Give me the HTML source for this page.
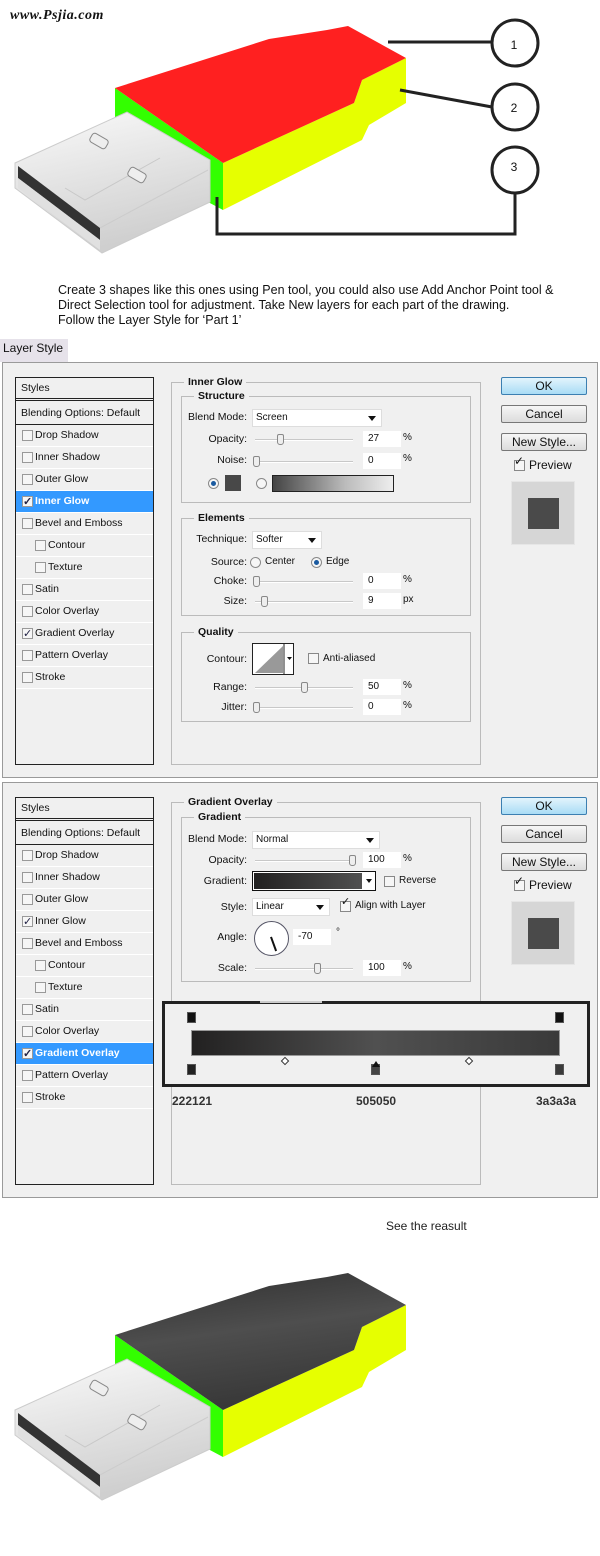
<!DOCTYPE html>
<html><head><meta charset="utf-8">
<style>
*{margin:0;padding:0;box-sizing:border-box}
body{width:600px;height:1556px;background:#fff;position:relative;overflow:hidden;font-family:"Liberation Sans",Tahoma,sans-serif;font-size:11px;color:#111}
.a{position:absolute}
.dlg{position:absolute;left:2px;width:596px;background:#f0f0f0;border:1px solid #9a9a9a}
.lp{position:absolute;left:12px;top:14px;width:139px;height:388px;border:1px solid #222;background:#f0f0f0}
.row{position:absolute;left:0;width:137px;height:22px;border-bottom:1px solid #fff;line-height:21px;padding-left:19px;font-size:10.5px}
.row .cb{position:absolute;left:6px;top:5px;width:11px;height:11px;border:1px solid #999;background:#f6f6f6}
.row.in{padding-left:32px}.row.in .cb{left:19px}
.row.sel{background:#3399ff;color:#fff;font-weight:bold}
.cb.on::after{content:"✓";position:absolute;left:0;top:-5px;font-size:11px;color:#224}
.fs{position:absolute;border:1px solid #bbb}
.lg{position:absolute;background:#f0f0f0;font-weight:bold;font-size:10.5px;padding:0 4px;line-height:12px}
.lbl{position:absolute;text-align:right;width:80px;font-size:10.5px;line-height:14px}
.dd{position:absolute;height:18px;background:#fff;border:1px solid #ddd;font-size:10px;line-height:16px;padding-left:3px}
.dd::after{content:"";position:absolute;right:5px;top:6px;border:4px solid transparent;border-top:5px solid #111}
.sl{position:absolute;height:2px;background:#c8c8c8;border-bottom:1px solid #fff}
.th{position:absolute;width:7px;height:11px;border:1px solid #888;background:#eee;border-radius:2px 2px 3px 3px}
.inp{position:absolute;width:38px;height:16px;background:#fff;font-size:10px;line-height:16px;padding-left:5px}
.u{position:absolute;font-size:10px}
.btn{position:absolute;left:498px;width:86px;height:18px;border:1px solid #777;border-radius:2px;background:linear-gradient(#f6f6f6,#dcdcdc);text-align:center;font-size:12px;line-height:16px}
.btn.ok{background:linear-gradient(#e3f4fc,#a9dcf5);border-color:#3c7fb1}
.ck{position:absolute;width:11px;height:11px;border:1px solid #888;background:#f6f6f6}
.rd{position:absolute;width:11px;height:11px;border:1px solid #888;border-radius:50%;background:#f6f6f6}
.rd.on::after{content:"";position:absolute;left:2px;top:2px;width:5px;height:5px;border-radius:50%;background:#1a5aa0}
</style></head><body>

<div class="a" style="left:10px;top:8px;font-family:'Liberation Serif',serif;font-style:italic;font-weight:bold;font-size:14px;letter-spacing:0.5px">www.Psjia.com</div>

<svg class="a" style="left:0;top:0" width="600" height="260" viewBox="0 0 600 260">
<polygon points="115,88 223,163 223,210 208,202 115,140" fill="#33ff00"/>
<polygon points="223,163 354,103 362,80 406,58 406,103 369,125 362,140 223,210" fill="#e6ff00"/>
<polygon points="115,88 269,39 327,30 348,26 406,58 362,80 354,103 223,163" fill="#ff2020"/>
<defs><linearGradient id="m" x1="0" y1="0" x2="0.3" y2="1"><stop offset="0" stop-color="#fafafa"/><stop offset="1" stop-color="#cfcfcf"/></linearGradient></defs>
<polygon points="15,163 127,112 210,160 210,202 102,253 15,188" fill="url(#m)" stroke="#ccc" stroke-width="1"/>
<polygon points="18,166 100,228 100,240 18,178" fill="#333"/>
<polygon points="18,178 100,240 100,250 18,188" fill="#e0e0e0"/>
<line x1="100" y1="228" x2="208" y2="170" stroke="#ccc"/>
<path d="M65,188 L85,200 L160,158" stroke="#c8c8c8" fill="none"/>
<rect x="90" y="136" width="18" height="10" rx="3" fill="#eee" stroke="#888" transform="rotate(30 99 141)"/>
<rect x="128" y="170" width="18" height="10" rx="3" fill="#eee" stroke="#888" transform="rotate(30 137 175)"/>
<g stroke="#222" stroke-width="3" fill="none">
<line x1="388" y1="42" x2="492" y2="42"/>
<line x1="400" y1="90" x2="492" y2="107"/>
<polyline points="217,197 217,234 515,234 515,193"/>
<circle cx="515" cy="43" r="23" fill="#fff"/>
<circle cx="515" cy="107" r="23" fill="#fff"/>
<circle cx="515" cy="170" r="23" fill="#fff"/>
</g>
<g font-size="12" font-family="Liberation Sans,sans-serif" text-anchor="middle" fill="#111"><text x="514" y="49">1</text><text x="514" y="112">2</text><text x="514" y="171">3</text></g>
</svg>

<div class="a" style="left:58px;top:283px;font-size:12.5px;line-height:15px;color:#111">Create 3 shapes like this ones using Pen tool, you could also use Add Anchor Point tool &amp;<br>Direct Selection tool for adjustment. Take New layers for each part of the drawing.<br>Follow the Layer Style for ‘Part 1’</div>

<div class="a" style="left:0;top:339px;width:68px;height:23px;background:#e6e2ea;font-size:12px;line-height:18px;padding-left:3px">Layer Style</div>

<!-- DIALOG 1 -->
<div class="dlg" style="top:362px;height:416px">
 <div class="lp">
  <div class="row" style="top:0;height:23px;border-bottom:3px double #222;padding-left:5px">Styles</div>
  <div class="row" style="top:25px;border-bottom:1px solid #222;padding-left:5px">Blending Options: Default</div>
  <div class="row" style="top:47px"><span class="cb"></span>Drop Shadow</div>
  <div class="row" style="top:69px"><span class="cb"></span>Inner Shadow</div>
  <div class="row" style="top:91px"><span class="cb"></span>Outer Glow</div>
  <div class="row sel" style="top:113px"><span class="cb on"></span>Inner Glow</div>
  <div class="row" style="top:135px"><span class="cb"></span>Bevel and Emboss</div>
  <div class="row in" style="top:157px"><span class="cb"></span>Contour</div>
  <div class="row in" style="top:179px"><span class="cb"></span>Texture</div>
  <div class="row" style="top:201px"><span class="cb"></span>Satin</div>
  <div class="row" style="top:223px"><span class="cb"></span>Color Overlay</div>
  <div class="row" style="top:245px"><span class="cb on"></span>Gradient Overlay</div>
  <div class="row" style="top:267px"><span class="cb"></span>Pattern Overlay</div>
  <div class="row" style="top:289px"><span class="cb"></span>Stroke</div>
 </div>
 <div class="fs" style="left:168px;top:19px;width:310px;height:383px"></div>
 <div class="lg" style="left:181px;top:13px">Inner Glow</div>
 <div class="fs" style="left:178px;top:33px;width:290px;height:107px"></div>
 <div class="lg" style="left:191px;top:27px">Structure</div>
 <div class="lbl" style="left:164px;top:47px">Blend Mode:</div><div class="dd" style="left:249px;top:46px;width:130px">Screen</div>
 <div class="lbl" style="left:164px;top:69px">Opacity:</div><div class="sl" style="left:252px;top:76px;width:98px"></div><div class="th" style="left:274px;top:71px"></div><div class="inp" style="left:360px;top:68px">27</div><div class="u" style="left:400px;top:69px">%</div>
 <div class="lbl" style="left:164px;top:90px">Noise:</div><div class="sl" style="left:252px;top:98px;width:98px"></div><div class="th" style="left:250px;top:93px"></div><div class="inp" style="left:360px;top:90px">0</div><div class="u" style="left:400px;top:90px">%</div>
 <div class="rd on" style="left:205px;top:115px"></div><div class="a" style="left:222px;top:112px;width:16px;height:16px;background:#484848"></div>
 <div class="rd" style="left:253px;top:115px"></div>
 <div class="a" style="left:269px;top:112px;width:122px;height:17px;border:1px solid #222;background:linear-gradient(90deg,#444,#bbb 60%,#eee)"></div>
 <div class="fs" style="left:178px;top:155px;width:290px;height:98px"></div>
 <div class="lg" style="left:191px;top:149px">Elements</div>
 <div class="lbl" style="left:164px;top:169px">Technique:</div><div class="dd" style="left:249px;top:168px;width:70px">Softer</div>
 <div class="lbl" style="left:164px;top:192px">Source:</div><div class="rd" style="left:247px;top:194px"></div><div class="u" style="left:262px;top:193px">Center</div><div class="rd on" style="left:308px;top:194px"></div><div class="u" style="left:323px;top:193px">Edge</div>
 <div class="lbl" style="left:164px;top:211px">Choke:</div><div class="sl" style="left:252px;top:218px;width:98px"></div><div class="th" style="left:250px;top:213px"></div><div class="inp" style="left:360px;top:210px">0</div><div class="u" style="left:400px;top:211px">%</div>
 <div class="lbl" style="left:164px;top:231px">Size:</div><div class="sl" style="left:252px;top:238px;width:98px"></div><div class="th" style="left:258px;top:233px"></div><div class="inp" style="left:360px;top:230px">9</div><div class="u" style="left:400px;top:231px">px</div>
 <div class="fs" style="left:178px;top:269px;width:290px;height:90px"></div>
 <div class="lg" style="left:191px;top:263px">Quality</div>
 <div class="lbl" style="left:164px;top:289px">Contour:</div>
 <div class="a" style="left:249px;top:280px;width:42px;height:32px;border:1px solid #222;background:#fff"><svg width="40" height="30"><polygon points="2,29 30,2 30,29" fill="#999"/><line x1="31" y1="0" x2="31" y2="30" stroke="#222"/><polygon points="34,13 39,13 36.5,16" fill="#111"/></svg></div>
 <div class="ck" style="left:305px;top:290px"></div><div class="u" style="left:320px;top:290px">Anti-aliased</div>
 <div class="lbl" style="left:164px;top:317px">Range:</div><div class="sl" style="left:252px;top:324px;width:98px"></div><div class="th" style="left:298px;top:319px"></div><div class="inp" style="left:360px;top:316px">50</div><div class="u" style="left:400px;top:317px">%</div>
 <div class="lbl" style="left:164px;top:337px">Jitter:</div><div class="sl" style="left:252px;top:344px;width:98px"></div><div class="th" style="left:250px;top:339px"></div><div class="inp" style="left:360px;top:336px">0</div><div class="u" style="left:400px;top:337px">%</div>
 <div class="btn ok" style="top:14px">OK</div>
 <div class="btn" style="top:42px">Cancel</div>
 <div class="btn" style="top:70px">New Style...</div>
 <div class="ck" style="left:511px;top:97px"></div><div class="a" style="left:511px;top:91px;font-size:12px">✓</div><div class="a" style="left:526px;top:95px;font-size:12px">Preview</div>
 <div class="a" style="left:508px;top:118px;width:64px;height:64px;background:#d6d6d6;border:1px solid #e6e6e6"></div>
 <div class="a" style="left:525px;top:135px;width:31px;height:31px;background:#4a4a4a"></div>
</div>

<!-- DIALOG 2 -->
<div class="dlg" style="top:782px;height:416px">
 <div class="lp">
  <div class="row" style="top:0;height:23px;border-bottom:3px double #222;padding-left:5px">Styles</div>
  <div class="row" style="top:25px;border-bottom:1px solid #222;padding-left:5px">Blending Options: Default</div>
  <div class="row" style="top:47px"><span class="cb"></span>Drop Shadow</div>
  <div class="row" style="top:69px"><span class="cb"></span>Inner Shadow</div>
  <div class="row" style="top:91px"><span class="cb"></span>Outer Glow</div>
  <div class="row" style="top:113px"><span class="cb on"></span>Inner Glow</div>
  <div class="row" style="top:135px"><span class="cb"></span>Bevel and Emboss</div>
  <div class="row in" style="top:157px"><span class="cb"></span>Contour</div>
  <div class="row in" style="top:179px"><span class="cb"></span>Texture</div>
  <div class="row" style="top:201px"><span class="cb"></span>Satin</div>
  <div class="row" style="top:223px"><span class="cb"></span>Color Overlay</div>
  <div class="row sel" style="top:245px"><span class="cb on"></span>Gradient Overlay</div>
  <div class="row" style="top:267px"><span class="cb"></span>Pattern Overlay</div>
  <div class="row" style="top:289px"><span class="cb"></span>Stroke</div>
 </div>
 <div class="fs" style="left:168px;top:19px;width:310px;height:383px"></div>
 <div class="lg" style="left:181px;top:13px">Gradient Overlay</div>
 <div class="fs" style="left:178px;top:34px;width:290px;height:165px"></div>
 <div class="lg" style="left:191px;top:28px">Gradient</div>
 <div class="lbl" style="left:164px;top:49px">Blend Mode:</div><div class="dd" style="left:249px;top:48px;width:128px">Normal</div>
 <div class="lbl" style="left:164px;top:70px">Opacity:</div><div class="sl" style="left:252px;top:77px;width:98px"></div><div class="th" style="left:346px;top:72px"></div><div class="inp" style="left:360px;top:69px">100</div><div class="u" style="left:400px;top:70px">%</div>
 <div class="lbl" style="left:164px;top:91px">Gradient:</div>
 <div class="a" style="left:249px;top:88px;width:124px;height:20px;border:1px solid #111;background:#fff"><div style="position:absolute;left:1px;top:1px;width:108px;height:16px;background:linear-gradient(90deg,#222121,#505050)"></div><div style="position:absolute;left:113px;top:7px;border:3px solid transparent;border-top:4px solid #111"></div></div>
 <div class="ck" style="left:381px;top:93px"></div><div class="u" style="left:396px;top:92px">Reverse</div>
 <div class="lbl" style="left:164px;top:117px">Style:</div><div class="dd" style="left:249px;top:115px;width:78px">Linear</div>
 <div class="ck" style="left:337px;top:118px"></div><div class="a" style="left:338px;top:112px;font-size:11px">✓</div><div class="u" style="left:352px;top:117px">Align with Layer</div>
 <div class="lbl" style="left:164px;top:147px">Angle:</div>
 <div class="a" style="left:251px;top:138px;width:35px;height:35px;border:1.5px solid #556;border-radius:50%;background:#fff"><div style="position:absolute;left:15px;top:15px;width:1.5px;height:15px;background:#111;transform:rotate(-20deg);transform-origin:top"></div></div>
 <div class="inp" style="left:290px;top:146px">-70</div><div class="u" style="left:333px;top:144px">°</div>
 <div class="lbl" style="left:164px;top:178px">Scale:</div><div class="sl" style="left:252px;top:185px;width:98px"></div><div class="th" style="left:311px;top:180px"></div><div class="inp" style="left:360px;top:177px">100</div><div class="u" style="left:400px;top:178px">%</div>
 <div class="a" style="left:159px;top:218px;width:428px;height:86px;border:3px solid #222;background:#f0f0f0"></div>
 <div class="a" style="left:257px;top:218px;width:62px;height:2px;background:#ccc"></div>
 <div class="a" style="left:188px;top:247px;width:369px;height:26px;background:linear-gradient(90deg,#222121,#505050 50%,#3a3a3a);border:1px solid #999"></div>
 <div class="a" style="left:184px;top:229px;width:9px;height:11px;border:1px solid #555;background:#111"></div>
 <div class="a" style="left:552px;top:229px;width:9px;height:11px;border:1px solid #555;background:#111"></div>
 <div class="a" style="left:184px;top:281px;width:9px;height:11px;border:1px solid #555;background:#222"></div>
 <div class="a" style="left:368px;top:281px;width:9px;height:11px;border:1px solid #555;background:#444"></div>
 <div class="a" style="left:369px;top:274px;border:4px solid transparent;border-bottom:6px solid #111"></div>
 <div class="a" style="left:552px;top:281px;width:9px;height:11px;border:1px solid #555;background:#3a3a3a"></div>
 <div class="a" style="left:279px;top:275px;width:6px;height:6px;border:1px solid #333;transform:rotate(45deg);background:#fff"></div>
 <div class="a" style="left:463px;top:275px;width:6px;height:6px;border:1px solid #333;transform:rotate(45deg);background:#fff"></div>
 <div class="a" style="left:169px;top:311px;font-weight:bold;font-size:12px;color:#333">222121</div>
 <div class="a" style="left:353px;top:311px;font-weight:bold;font-size:12px;color:#333">505050</div>
 <div class="a" style="left:533px;top:311px;font-weight:bold;font-size:12px;color:#333">3a3a3a</div>
 <div class="btn ok" style="top:14px">OK</div>
 <div class="btn" style="top:42px">Cancel</div>
 <div class="btn" style="top:70px">New Style...</div>
 <div class="ck" style="left:511px;top:97px"></div><div class="a" style="left:511px;top:91px;font-size:12px">✓</div><div class="a" style="left:526px;top:95px;font-size:12px">Preview</div>
 <div class="a" style="left:508px;top:118px;width:64px;height:64px;background:#d6d6d6;border:1px solid #e6e6e6"></div>
 <div class="a" style="left:525px;top:135px;width:31px;height:31px;background:#4a4a4a"></div>
</div>

<div class="a" style="left:386px;top:1219px;font-size:12px;color:#222">See the reasult</div>

<svg class="a" style="left:0;top:1247px" width="600" height="260" viewBox="0 0 600 260">
<defs><linearGradient id="d" x1="0" y1="0" x2="0.3" y2="1"><stop offset="0" stop-color="#2e2e2e"/><stop offset="0.5" stop-color="#4e4e4e"/><stop offset="1" stop-color="#383838"/></linearGradient>
<linearGradient id="m2" x1="0" y1="0" x2="0.3" y2="1"><stop offset="0" stop-color="#fafafa"/><stop offset="1" stop-color="#cfcfcf"/></linearGradient></defs>
<polygon points="115,88 223,163 223,210 208,202 115,140" fill="#33ff00"/>
<polygon points="223,163 354,103 362,80 406,58 406,103 369,125 362,140 223,210" fill="#e6ff00"/>
<polygon points="115,88 269,39 327,30 348,26 406,58 362,80 354,103 223,163" fill="url(#d)"/>
<polygon points="15,163 127,112 210,160 210,202 102,253 15,188" fill="url(#m2)" stroke="#ccc" stroke-width="1"/>
<polygon points="18,166 100,228 100,240 18,178" fill="#333"/>
<polygon points="18,178 100,240 100,250 18,188" fill="#e0e0e0"/>
<line x1="100" y1="228" x2="208" y2="170" stroke="#ccc"/>
<path d="M65,188 L85,200 L160,158" stroke="#c8c8c8" fill="none"/>
<rect x="90" y="136" width="18" height="10" rx="3" fill="#eee" stroke="#888" transform="rotate(30 99 141)"/>
<rect x="128" y="170" width="18" height="10" rx="3" fill="#eee" stroke="#888" transform="rotate(30 137 175)"/>
</svg>

</body></html>
